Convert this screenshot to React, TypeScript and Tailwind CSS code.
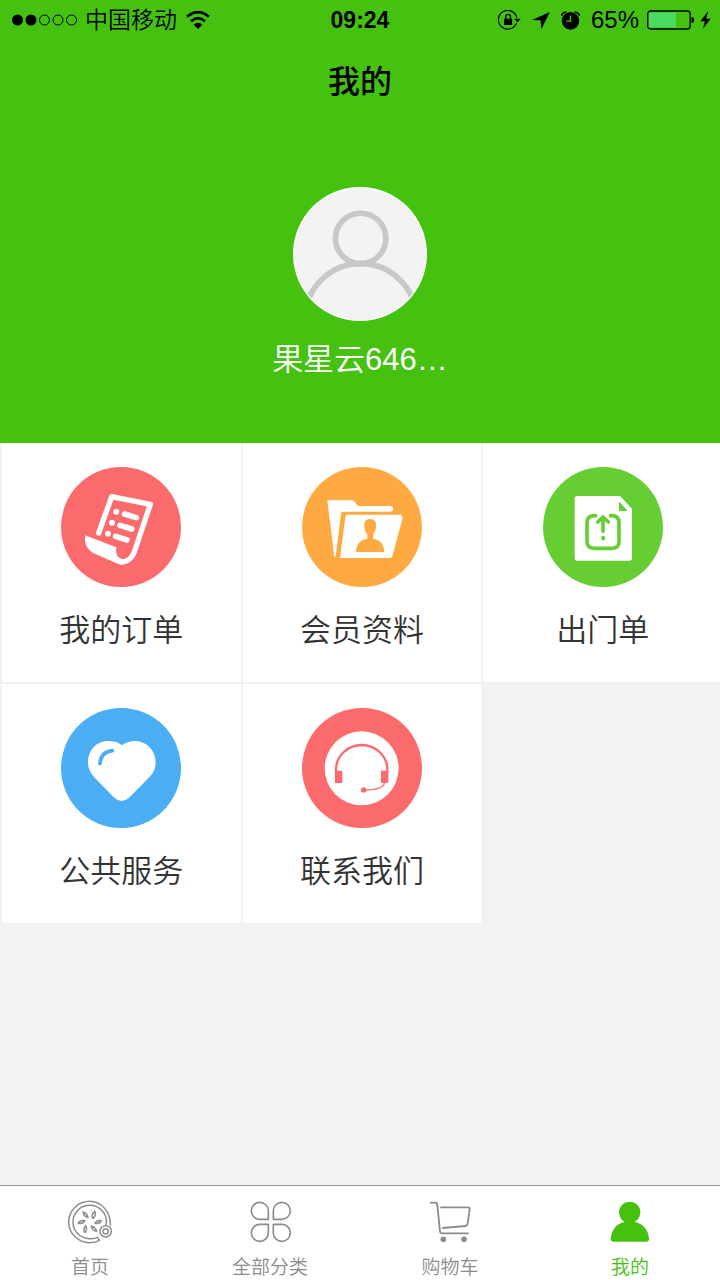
import type { ReactNode } from 'react';

function OrderIcon() {
  return (
    <svg viewBox="65 81 360 360" className="size-[120px]" aria-hidden="true">
      <circle cx="245" cy="261" r="180" fill="#fb6a6c" />
      <path d="M178 279 217 170 333 193 287 330Q275 366 246 366" fill="none" stroke="#fff" strokeWidth="16" strokeLinecap="round" strokeLinejoin="round" />
      <path d="M137 286 231 322Q227 356 252 357V374Q240 374 230 369L160 338Q133 322 137 286Z" fill="#fff" />
      <g fill="#fff">
        <circle cx="231" cy="215" r="9" />
        <circle cx="218" cy="248" r="9" />
        <circle cx="206" cy="281" r="9" />
      </g>
      <path d="M256 222 291 233M242 256 277 267M229 289 263 300" stroke="#fff" strokeWidth="17" strokeLinecap="round" />
    </svg>
  );
}

function MemberIcon() {
  return (
    <svg viewBox="66 81 360 360" className="size-[120px]" aria-hidden="true">
      <circle cx="246" cy="261" r="180" fill="#ffa943" />
      <path d="M142 181H217Q221 181 224 185L234 198H332Q339 198 339 206 339 215 332 215H188Q184 215 183 221L167 350H163Z" fill="#fff" />
      <path d="M203 224H356Q370 224 367 238L337 349Q336 354 331 354H180L196 231Q197 224 203 224Z" fill="#fff" />
      <path d="M270 237C284 237 289 246 288 259 287 274 283 278 279 284V296C298 299 312 310 313 336H228C229 310 243 299 262 296V284C257 278 254 274 253 259 252 246 257 237 270 237Z" fill="#ffa943" />
    </svg>
  );
}

function ExitPassIcon() {
  return (
    <svg viewBox="69 81 360 360" className="size-[120px]" aria-hidden="true">
      <circle cx="249" cy="261" r="180" fill="#66ce33" />
      <path d="M172 168H300L336 206V354Q336 362 328 362H172Q164 362 164 354V176Q164 168 172 168Z" fill="#fff" />
      <path d="M297 184V213H323Z" fill="#66ce33" />
      <g fill="none" stroke="#66ce33" strokeWidth="11" strokeLinecap="round" strokeLinejoin="round">
        <path d="M227 227H221Q201 228 201 248V304Q201 325 222 325H276Q297 325 297 304V248Q297 228 277 227H272" />
        <path d="M249 274V231M233 246 249 231 265 246" />
      </g>
      <rect x="244" y="288" width="11" height="13" rx="3" fill="#66ce33" />
    </svg>
  );
}

function ServiceIcon() {
  return (
    <svg viewBox="184 85 360 360" className="size-[120px]" aria-hidden="true">
      <circle cx="364" cy="265" r="180" fill="#4baef4" />
      <path d="M367 197C352 186 340 184 326 184 290 184 265 212 265 248 265 268 274 283 288 297L344 354Q366 374 388 354L446 296C460 282 468 268 468 248 468 212 440 184 405 184 392 184 380 187 367 197Z" fill="#fff" />
      <path d="M301 252Q303 217 338 213" fill="none" stroke="#4baef4" strokeWidth="11" strokeLinecap="round" />
    </svg>
  );
}

function ContactIcon() {
  return (
    <svg viewBox="66 55 360 360" className="size-[120px]" aria-hidden="true">
      <circle cx="246" cy="235" r="180" fill="#fb6a6c" />
      <circle cx="245" cy="236" r="111" fill="#fff" />
      <path d="M168 246V240A77 74 0 0 1 322 240V246" fill="none" stroke="#fb6a6c" strokeWidth="7" />
      <path d="M165 243H187V280H165ZM303 243H325V280H303Z" fill="#fb6a6c" />
      <path d="M313 279Q312 300 252 301" fill="none" stroke="#fb6a6c" strokeWidth="4" />
      <circle cx="251" cy="301" r="8" fill="#fb6a6c" />
    </svg>
  );
}

function HomeIcon() {
  return (
    <svg viewBox="198 70 144 144" className="size-12" aria-hidden="true">
      <g fill="none" stroke="#8c8c8c" strokeWidth="4.5" strokeLinejoin="round">
        <path d="M331 153C333 110 303 80 269 80 234 80 206 108 206 142 206 176 234 204 269 204 280 204 290 202 298 197L293 188C286 191 278 193 269 192 241 192 219 170 219 142 219 114 241 92 269 92 299 92 322 117 319 146L317 151" />
        <circle cx="317" cy="170" r="17" />
        <circle cx="317" cy="170" r="8" />
        <path d="M249 112Q260 114 264 128 252 126 249 112ZM284 110Q290 121 279 131 272 120 284 110ZM235 146Q240 136 254 138 249 149 235 146ZM285 146Q290 136 304 138 299 149 285 146ZM257 153Q263 163 255 174 247 164 257 153ZM274 155Q286 157 290 170 278 169 274 155Z" />
      </g>
    </svg>
  );
}

function CategoryIcon() {
  return (
    <svg viewBox="738 70 144 144" className="size-12" aria-hidden="true">
      <g fill="none" stroke="#8c8c8c" strokeWidth="5" strokeLinejoin="round">
        <path d="M805 134H779A25.500 25.500 0 1 1 805 108Z" />
        <path d="M820 134V108A25.500 25.500 0 1 1 846 134Z" />
        <path d="M805 149V176A25.500 25.500 0 1 1 779 149Z" />
        <path d="M820 149H846A25.500 25.500 0 1 1 820 176Z" />
      </g>
    </svg>
  );
}

function CartIcon() {
  return (
    <svg viewBox="198 70 144 144" className="size-12" aria-hidden="true">
      <g fill="none" stroke="#8c8c8c" strokeWidth="5.500" strokeLinecap="round" strokeLinejoin="round">
        <path d="M212 84H225Q231 84 232 91L240 170Q241 176 247 176H324" />
        <path d="M243 98H323Q330 98 329 105L323 147Q322 153 316 154L249 160" />
      </g>
      <circle cx="250" cy="194" r="8.500" fill="#8c8c8c" />
      <circle cx="312" cy="194" r="8.500" fill="#8c8c8c" />
    </svg>
  );
}

function MeIcon() {
  return (
    <svg viewBox="738 70 144 144" className="size-12" aria-hidden="true">
      <g fill="#45c210">
        <circle cx="809" cy="113" r="32" />
        <path d="M793 138H825V142C848 147 865 165 867 191Q868 201 859 201H760Q751 201 752 191C755 165 770 147 793 142Z" />
      </g>
    </svg>
  );
}

function StatusBar() {
  return (
    <div className="grid h-10 grid-cols-[1fr_auto_1fr] items-center px-[9px] text-[23px] text-black">
      <div className="flex items-center pl-[3px]">
        <svg viewBox="0 0 66 12" className="h-3 w-[66px]" aria-hidden="true">
          <circle cx="5.500" cy="6" r="5.500" />
          <circle cx="19" cy="6" r="5.500" />
          <g fill="none" stroke="#000">
            <circle cx="32.500" cy="6" r="5" />
            <circle cx="46" cy="6" r="5" />
            <circle cx="59.500" cy="6" r="5" />
          </g>
        </svg>
        <span className="ml-[7px] font-[350]">中国移动</span>
        <svg viewBox="560 30 70 54" className="ml-[9px] h-[18px] w-6" aria-hidden="true">
          <g fill="none" stroke="#000" strokeWidth="8">
            <path d="M562 47Q595 19 628 47" />
            <path d="M574 61Q595 42 616 61" />
          </g>
          <path d="M582 71Q595 60 608 71L595 84Z" />
        </svg>
      </div>
      <span className="font-bold">09:24</span>
      <div className="flex items-center justify-end">
        <svg viewBox="54 28 68 60" className="h-5 w-[23px]" aria-hidden="true">
          <path d="M109 67A28 28 0 1 1 110 51" fill="none" stroke="#000" strokeWidth="3.500" />
          <path d="M102 54H122L112 65ZM72 54H96V73H72Z" />
          <path d="M77 55V48Q77 41 84 41 91 41 91 48V55" fill="none" stroke="#000" strokeWidth="4" />
        </svg>
        <svg viewBox="156 34 53 51" className="ml-[11px] h-[17px] w-[18px]" aria-hidden="true">
          <path d="M209 34 184 85 181 59 156 58Z" />
        </svg>
        <svg viewBox="245 29 56 56" className="ml-[11px] size-[19px]" aria-hidden="true">
          <circle cx="273" cy="58" r="26" />
          <path d="M247 41Q250 33 259 32M287 32Q296 33 299 41" fill="none" stroke="#000" strokeWidth="5" strokeLinecap="round" />
          <path d="M273 42V59H260" fill="none" stroke="#45c210" strokeWidth="4" />
        </svg>
        <span className="ml-[11px] text-[24px]">65%</span>
        <svg viewBox="0 0 48 20" className="ml-2 h-5 w-12" aria-hidden="true">
          <rect x="0.700" y="1" width="42.500" height="18" rx="3" fill="none" stroke="#000" strokeWidth="1.300" />
          <rect x="2" y="2.500" width="27" height="15" rx="1" fill="#4cda64" />
          <path d="M44.500 7Q47 7 47 10 47 13 44.500 13Z" />
        </svg>
        <svg viewBox="658 30 34 54" className="ml-[5px] h-[18px] w-[11px]" aria-hidden="true">
          <path d="M683 30 659 61H673L667 84 691 53H677Z" />
        </svg>
      </div>
    </div>
  );
}

function Avatar() {
  return (
    <svg viewBox="98 51 404 404" className="size-[134px]" role="img" aria-label="头像">
      <clipPath id="avatar-disc">
        <circle cx="300" cy="253" r="198" />
      </clipPath>
      <circle cx="300" cy="253" r="202" fill="#fff" />
      <g clipPath="url(#avatar-disc)">
        <circle cx="300" cy="253" r="198" fill="#f3f3f3" />
        <g fill="none" stroke="#c8c8c8" strokeWidth="17">
          <circle cx="302" cy="206" r="76" />
          <circle cx="302" cy="450" r="168" />
        </g>
        <path d="M190 470H410L454 387Q300 480 146 387Z" fill="#f3f3f3" />
      </g>
    </svg>
  );
}

const services: { label: string; icon: ReactNode }[] = [
  { label: '我的订单', icon: <OrderIcon /> },
  { label: '会员资料', icon: <MemberIcon /> },
  { label: '出门单', icon: <ExitPassIcon /> },
  { label: '公共服务', icon: <ServiceIcon /> },
  { label: '联系我们', icon: <ContactIcon /> },
];

const tabs: { label: string; icon: ReactNode; active?: boolean }[] = [
  { label: '首页', icon: <HomeIcon /> },
  { label: '全部分类', icon: <CategoryIcon /> },
  { label: '购物车', icon: <CartIcon /> },
  { label: '我的', icon: <MeIcon />, active: true },
];

export default function App() {
  return (
    <div className="flex min-h-screen flex-col overflow-hidden bg-[#f1f2f4] font-['Liberation_Sans','Noto_Sans_CJK_SC',sans-serif]">
      <header className="bg-[#45c210] pb-[63px]">
        <StatusBar />
        <h1 className="pt-[18px] pb-4 text-center text-[32px] leading-[48px] font-medium text-black">我的</h1>
        <div className="flex flex-col items-center pt-[65px]">
          <Avatar />
          <p className="mt-[19px] text-[31px] leading-10 font-[350] text-white">果星云646…</p>
        </div>
      </header>

      <main className="flex-1">
        <div className="-mr-0.5 grid grid-cols-3 gap-0.5 pl-0.5">
          {services.map((item) => (
            <button key={item.label} type="button" className="flex flex-col items-center bg-white pt-6 pb-[31px]">
              {item.icon}
              <span className="mt-6 text-[31px] leading-10 font-[350] text-[#333]">{item.label}</span>
            </button>
          ))}
        </div>
      </main>

      <nav className="grid grid-cols-4 border-t border-[#96969a] bg-white pt-3">
        {tabs.map((tab) => (
          <a
            key={tab.label}
            href="#"
            aria-current={tab.active ? 'page' : undefined}
            className={
              tab.active
                ? 'flex flex-col items-center text-[#45c210]'
                : 'flex flex-col items-center text-[#8c8c8c]'
            }
          >
            {tab.icon}
            <span className="mt-2.5 text-[19px] leading-6 font-[350]">{tab.label}</span>
          </a>
        ))}
      </nav>
    </div>
  );
}
